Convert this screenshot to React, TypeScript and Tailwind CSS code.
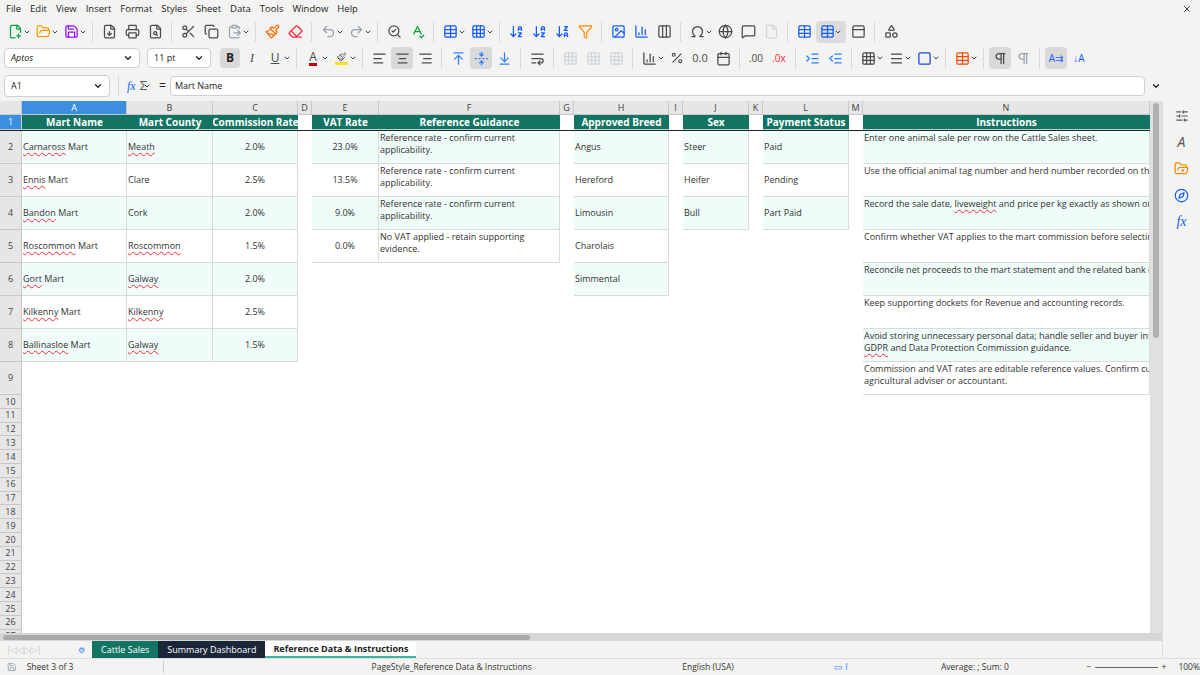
import React from "react";
import {
  FilePlus2, FolderOpen, Save, FileDown, Printer, FileSearch, Scissors, Copy, ClipboardPaste, Paintbrush, Eraser, Undo2, Redo2,
  SearchCheck, SpellCheck, Table, Grid3x3, ArrowDownAZ, ArrowDownZA, Filter, Image, BarChart3, Omega, Globe, MessageSquare, File,
  Columns3, PanelTop, Shapes, AlignLeft, AlignCenter, AlignRight, ArrowUpToLine, FoldVertical, ArrowDownToLine, WrapText,
  Percent, Calendar, IndentIncrease, IndentDecrease, Square, Menu, SlidersHorizontal, Compass, FolderOpenDot, ChevronDown, Pilcrow, X
} from "lucide-react";

const colW = [22, 105, 86, 85, 14, 67, 181, 14, 95, 14, 66, 14, 86, 14, 287];
const colL = ["", "A", "B", "C", "D", "E", "F", "G", "H", "I", "J", "K", "L", "M", "N"];

const A = ["Mart Name", "Carnaross Mart", "Ennis Mart", "Bandon Mart", "Roscommon Mart", "Gort Mart", "Kilkenny Mart", "Ballinasloe Mart"];
const B = ["Mart County", "Meath", "Clare", "Cork", "Roscommon", "Galway", "Kilkenny", "Galway"];
const C = ["Commission Rate", "2.0%", "2.5%", "2.0%", "1.5%", "2.0%", "2.5%", "1.5%"];
const E = ["VAT Rate", "23.0%", "13.5%", "9.0%", "0.0%"];
const F = ["Reference Guidance", "Reference rate - confirm current applicability.", "Reference rate - confirm current applicability.", "Reference rate - confirm current applicability.", "No VAT applied - retain supporting evidence."];
const H = ["Approved Breed", "Angus", "Hereford", "Limousin", "Charolais", "Simmental"];
const J = ["Sex", "Steer", "Heifer", "Bull"];
const L = ["Payment Status", "Paid", "Pending", "Part Paid"];
const N = ["Instructions",
  "Enter one animal sale per row on the Cattle Sales sheet.",
  "Use the official animal tag number and herd number recorded on the mart docket.",
  "Record the sale date, liveweight and price per kg exactly as shown on the docket.",
  "Confirm whether VAT applies to the mart commission before selecting a rate.",
  "Reconcile net proceeds to the mart statement and the related bank receipt.",
  "Keep supporting dockets for Revenue and accounting records.",
  "Avoid storing unnecessary personal data; handle seller and buyer information in line with GDPR and Data Protection Commission guidance.",
  "Commission and VAT rates are editable reference values. Confirm current rates with your agricultural adviser or accountant."];

const cols: Record<number, { d: string[]; align: string }> = {
  1: { d: A, align: "left" }, 2: { d: B, align: "left" }, 3: { d: C, align: "center" },
  5: { d: E, align: "center" }, 6: { d: F, align: "left" }, 8: { d: H, align: "left" },
  10: { d: J, align: "left" }, 12: { d: L, align: "left" }, 14: { d: N, align: "left" },
};
const squiggle = new Set(["Carnaross", "Meath", "Ennis", "Bandon", "Roscommon", "Gort", "Galway", "Kilkenny", "Ballinasloe", "liveweight", "GDPR"]);

function Txt({ s }: { s: string }) {
  return <>{s.split(/(\s+)/).map((w, i) => squiggle.has(w) ? <span key={i} className="underline decoration-wavy decoration-red-500 decoration-[0.5px] underline-offset-2">{w}</span> : <React.Fragment key={i}>{w}</React.Fragment>)}</>;
}

const rowH = (r: number) => (r === 1 ? 15 : r <= 9 ? 33 : 13.8);

function Cell({ r, c }: { r: number; c: number }) {
  const col = cols[c];
  const w = colW[c];
  const h = rowH(r);
  if (!col || r > col.d.length) {
    return <div style={{ width: w, height: h }} className="shrink-0 bg-white" />;
  }
  if (r === 1) {
    return <div style={{ width: w, height: h }} className="shrink-0 bg-[#137464] text-white font-bold text-[10px] flex items-center justify-center border-b border-white/70 overflow-hidden whitespace-nowrap">{col.d[0]}</div>;
  }
  const bg = r % 2 === 0 ? "bg-[#effcf9]" : "bg-white";
  const top = c === 14 || c === 6;
  return (
    <div style={{ width: w, height: h }} className={`shrink-0 ${bg} border-b border-r border-[#d5dcdb] text-[9px] leading-[12px] text-[#333] px-[1px] flex overflow-hidden ${top ? "items-start pt-[1px]" : "items-center"} ${col.align === "center" ? "justify-center" : ""}`}>
      <div className={c === 14 ? "w-[400px] shrink-0" : ""}><Txt s={col.d[r - 1]} /></div>
    </div>
  );
}

const I = ({ children }: { children: React.ReactNode }) => <div className="w-[22px] h-[22px] flex items-center justify-center text-[#4a4a4a]">{children}</div>;
const Dd = () => <ChevronDown size={8} className="text-[#444] -ml-1" strokeWidth={3} />;
const Sep = () => <div className="w-px h-5 bg-[#d8d8d8] mx-1" />;

export default function App() {
  const s = 15;
  return (
    <div className="w-[1200px] h-[675px] overflow-hidden bg-[#f3f3f2] flex flex-col text-[#222]" style={{ fontFamily: "'Open Sans', 'Noto Sans', sans-serif" }}>
      <div className="h-[18px] flex items-center gap-[9px] px-[6px] text-[9.5px] relative">
        {["File", "Edit", "View", "Insert", "Format", "Styles", "Sheet", "Data", "Tools", "Window", "Help"].map(m => <span key={m}>{m}</span>)}
        <X size={10} className="absolute right-2 top-1" />
      </div>
      <div className="h-[27px] flex items-center px-[4px] gap-[1px]">
        <I><FilePlus2 size={s} className="text-green-600" /></I><Dd />
        <I><FolderOpen size={s} className="text-amber-500" /></I><Dd />
        <I><Save size={s} className="text-purple-600" /></I><Dd /><Sep />
        <I><FileDown size={s} /></I><I><Printer size={s} /></I><I><FileSearch size={s} /></I><Sep />
        <I><Scissors size={s} /></I><I><Copy size={s} /></I><I><ClipboardPaste size={s} className="text-gray-400" /></I><Dd /><Sep />
        <I><Paintbrush size={s} className="text-orange-500" /></I><I><Eraser size={s} className="text-red-500" /></I><Sep />
        <I><Undo2 size={s} className="text-gray-400" /></I><Dd /><I><Redo2 size={s} className="text-gray-400" /></I><Dd /><Sep />
        <I><SearchCheck size={s} /></I><I><SpellCheck size={s} className="text-green-600" /></I><Sep />
        <I><Table size={s} className="text-blue-600" /></I><Dd /><I><Grid3x3 size={s} className="text-blue-600" /></I><Dd /><Sep />
        <I><ArrowDownAZ size={s} className="text-blue-600" /></I><I><ArrowDownAZ size={s} className="text-blue-600" /></I><I><ArrowDownZA size={s} className="text-blue-600" /></I><I><Filter size={s} className="text-orange-400" /></I><Sep />
        <I><Image size={s} className="text-blue-600" /></I><I><BarChart3 size={s} className="text-blue-600" /></I><I><Columns3 size={s} /></I><Sep />
        <I><Omega size={s} /></I><Dd /><I><Globe size={s} /></I><I><MessageSquare size={s} /></I><I><File size={s} className="text-gray-300" /></I><Sep />
        <I><Table size={s} className="text-blue-600" /></I><div className="bg-[#dcdcdc] rounded flex items-center pr-1"><I><Table size={s} className="text-blue-600" /></I><Dd /></div><I><PanelTop size={s} /></I><Sep /><I><Shapes size={s} /></I>
      </div>
      <div className="h-[26px] flex items-center px-[4px] gap-[1px]">
        <div className="w-[136px] h-[20px] bg-white border border-[#cfcfcf] rounded-sm flex items-center justify-between px-1.5 text-[9px] italic">Aptos<ChevronDown size={10} strokeWidth={3} className="not-italic" /></div>
        <div className="w-[64px] h-[20px] ml-[6px] bg-white border border-[#cfcfcf] rounded-sm flex items-center justify-between px-1.5 text-[9px]">11 pt<ChevronDown size={10} strokeWidth={3} /></div>
        <div className="ml-2 w-[20px] h-[20px] bg-[#d9d9d9] rounded flex items-center justify-center font-bold text-[12px]">B</div>
        <I><span className="italic text-[12px]" style={{ fontFamily: "serif" }}>I</span></I>
        <I><span className="underline text-[12px]">U</span></I><Dd /><Sep />
        <I><span className="text-[12px] border-b-[3px] border-red-700 leading-none">A</span></I><Dd />
        <I><Paintbrush size={13} className="border-b-[3px] border-yellow-300" /></I><Dd /><Sep />
        <I><AlignLeft size={s} /></I><div className="bg-[#d9d9d9] rounded"><I><AlignCenter size={s} /></I></div><I><AlignRight size={s} /></I><Sep />
        <I><ArrowUpToLine size={s} className="text-blue-500" /></I><div className="bg-[#d9d9d9] rounded"><I><FoldVertical size={s} className="text-blue-500" /></I></div><I><ArrowDownToLine size={s} className="text-blue-500" /></I><Sep />
        <I><WrapText size={s} /></I><Sep />
        <I><Grid3x3 size={s} className="text-gray-300" /></I><I><Grid3x3 size={s} className="text-gray-300" /></I><I><Grid3x3 size={s} className="text-gray-300" /></I><Sep />
        <I><BarChart3 size={s} /></I><Dd /><I><Percent size={14} /></I><I><span className="text-[11px]">0.0</span></I><I><Calendar size={s} /></I><Sep />
        <I><span className="text-[10px]">.00</span></I><I><span className="text-[10px] text-red-500">.0x</span></I><Sep />
        <I><IndentIncrease size={s} className="text-blue-500" /></I><I><IndentDecrease size={s} className="text-blue-500" /></I><Sep />
        <I><Grid3x3 size={s} /></I><Dd /><I><Menu size={s} /></I><Dd /><I><Square size={s} className="text-blue-700" /></I><Dd /><Sep />
        <I><Table size={s} className="text-orange-600" /></I><Dd /><Sep />
        <div className="bg-[#d9d9d9] rounded"><I><Pilcrow size={s} /></I></div><I><Pilcrow size={s} className="text-gray-400" /></I><Sep />
        <div className="bg-[#d9d9d9] rounded"><I><span className="text-[10px] text-blue-600">A⇉</span></I></div><I><span className="text-[10px] text-blue-600">↓A</span></I>
      </div>
      <div className="h-[30px] flex items-center px-[4px] relative">
        <div className="w-[106px] h-[22px] bg-white border border-[#cfcfcf] rounded-sm flex items-center justify-between px-1.5 text-[9px]">A1<ChevronDown size={10} strokeWidth={3} /></div>
        <div className="w-px h-5 bg-[#d8d8d8] mx-2" />
        <span className="italic text-blue-600 text-[12px]" style={{ fontFamily: "serif" }}>fx</span>
        <span className="ml-1 text-[13px] text-[#555]">Σ</span><Dd />
        <span className="ml-2 text-[12px]">=</span>
        <div className="ml-1 w-[975px] h-[20px] bg-white border border-[#cfcfcf] rounded-sm flex items-center px-1 text-[9px]">Mart Name</div>
        <ChevronDown size={10} strokeWidth={3} className="ml-1.5" />
      </div>
      <div className="flex flex-1 min-h-0">
        <div className="w-[1162px] flex flex-col">
          <div className="h-[532px] flex overflow-hidden bg-white relative">
            <div className="w-[1150px] overflow-hidden">
              <div className="flex h-[14px]">
                {colW.map((w, c) => (
                  <div key={c} style={{ width: w }} className={`shrink-0 text-[9px] flex items-center justify-center border-r border-b border-[#c8c8c8] ${c === 1 ? "bg-[#3c8ee0] text-white" : "bg-[#e6e6e6] text-[#444]"}`}>{colL[c]}</div>
                ))}
              </div>
              {Array.from({ length: 27 }, (_, i) => i + 1).map(r => (
                <div key={r} className={`flex ${r === 1 ? "border-b border-[#222]" : ""}`}>
                  <div style={{ width: 22, height: rowH(r) }} className={`shrink-0 text-[9px] flex items-center justify-center border-r border-b border-[#c8c8c8] ${r === 1 ? "bg-[#3c8ee0] text-white" : "bg-[#e6e6e6] text-[#444]"}`}>{r}</div>
                  {colW.slice(1).map((_, k) => <Cell key={k} r={r} c={k + 1} />)}
                </div>
              ))}
            </div>
            <div className="w-[12px] bg-[#e0e0e0] relative">
              <div className="absolute left-[3px] top-[2px] w-[6px] h-[235px] bg-[#b0b0b0] rounded" />
            </div>
          </div>
          <div className="h-[8px] bg-[#d6d6d6] relative"><div className="absolute left-[3px] top-[2px] w-[527px] h-[5px] bg-[#aaa] rounded" /></div>
          <div className="h-[17px] flex items-center text-[9px]">
            <span className="text-[#c8c8c8] tracking-tighter px-[6px] w-[78px]">|◁◁▷▷|</span>
            <span className="w-[14px] text-[8px] text-blue-500">⚙</span>
            <div className="h-full px-[9px] bg-[#137464] text-white flex items-center">Cattle Sales</div>
            <div className="h-full px-[9px] bg-[#1b2639] text-white flex items-center">Summary Dashboard</div>
            <div className="h-full px-[8px] bg-white font-bold flex items-center border-b-2 border-[#3bb5a0]">Reference Data &amp; Instructions</div>
          </div>
        </div>
        <div className="w-[38px] border-l border-[#ddd] flex flex-col items-center gap-[12px] pt-[8px] text-[#555]">
          <SlidersHorizontal size={14} />
          <span className="text-[14px] italic leading-none">A</span>
          <FolderOpenDot size={15} className="text-orange-400" />
          <Compass size={15} className="text-blue-600" />
          <span className="italic text-blue-600 text-[14px] leading-none" style={{ fontFamily: "serif" }}>fx</span>
        </div>
      </div>
      <div className="h-[17px] flex items-center text-[8.5px] text-[#333] border-t border-[#ddd]">
        <Save size={10} className="ml-[7px] text-gray-400" />
        <span className="ml-[10px] w-[140px]">Sheet 3 of 3</span>
        <div className="w-px h-3 bg-[#ccc]" />
        <span className="ml-[208px] w-[320px]">PageStyle_Reference Data &amp; Instructions</span>
        <span className="w-[140px]">English (USA)</span>
        <span className="ml-[16px] w-[110px] text-blue-500">▭ I</span>
        <span className="w-[150px]">Average: ; Sum: 0</span>
        <span>−</span><div className="w-[64px] h-px bg-[#666] mx-1" /><span>+</span>
        <span className="ml-3">100%</span>
      </div>
    </div>
  );
}
